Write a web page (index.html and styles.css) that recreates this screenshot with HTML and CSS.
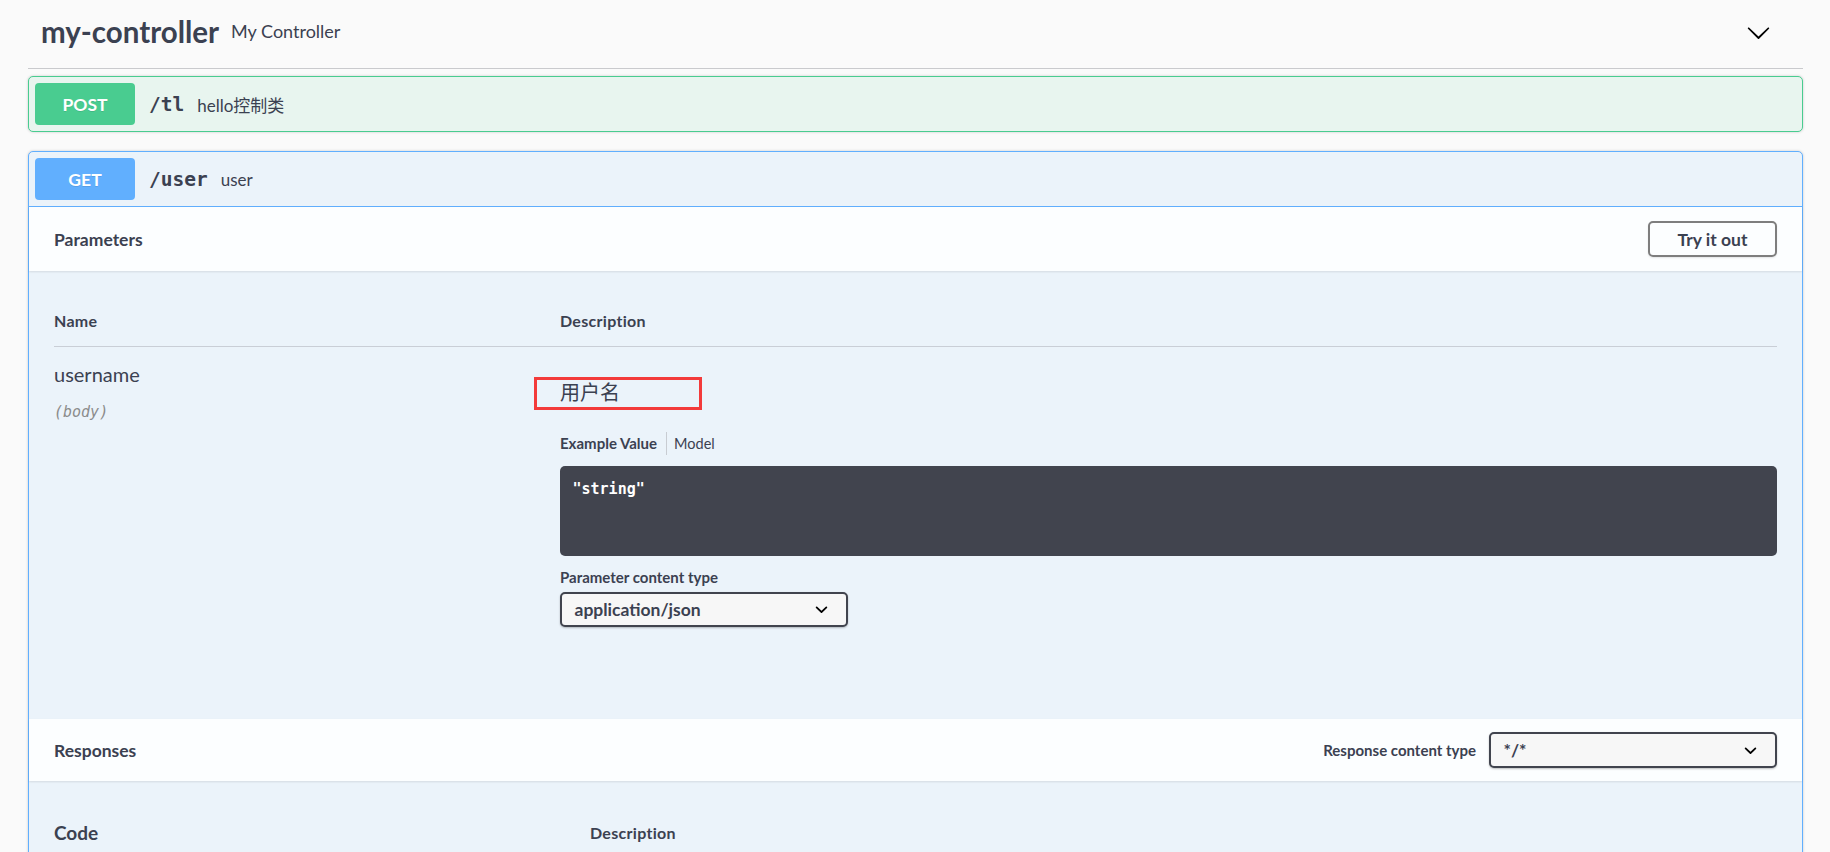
FILE: index.html
```html
<!DOCTYPE html>
<html lang="en">
<head>
<meta charset="utf-8">
<title>Swagger UI</title>
<link rel="stylesheet" href="styles.css">
</head>
<body>
<div class="page">
  <div class="wrapper">
    <section class="tag-section">
      <h3 class="opblock-tag">
        <span class="tag-name">my-controller</span>
        <small class="tag-desc">My Controller</small>
        <button class="expand" type="button" aria-label="collapse">
          <svg width="25" height="25" viewBox="0 0 20 20"><path d="M17.418 6.109c.272-.268.709-.268.979 0s.271.701 0 .969l-7.908 7.830c-.27.268-.707.268-.979 0l-7.908-7.830c-.27-.268-.27-.701 0-.969.271-.268.709-.268.979 0L10 13.25l7.418-7.141z" fill="#000"/></svg>
        </button>
      </h3>

      <div class="opblock opblock-post">
        <div class="summary">
          <span class="method">POST</span>
          <span class="path">/tl</span>
          <span class="summary-desc">hello控制类</span>
        </div>
      </div>

      <div class="opblock opblock-get is-open">
        <div class="summary">
          <span class="method">GET</span>
          <span class="path">/user</span>
          <span class="summary-desc">user</span>
        </div>

        <div class="section-header">
          <h4>Parameters</h4>
          <button class="try-out" type="button">Try it out</button>
        </div>

        <div class="table-container">
          <table class="parameters">
            <thead>
              <tr><th class="col-name">Name</th><th class="col-desc">Description</th></tr>
            </thead>
            <tbody>
              <tr>
                <td class="col-name">
                  <div class="param-name">username</div>
                  <div class="param-in">(body)</div>
                </td>
                <td class="col-desc">
                  <div class="markdown">用户名<span class="annot"></span></div>
                  <ul class="tabs">
                    <li class="tab active">Example Value</li>
                    <li class="tab">Model</li>
                  </ul>
                  <pre class="code">"string"</pre>
                  <div class="ct-label">Parameter content type</div>
                  <div class="select select-param">
                    <span>application/json</span>
                    <svg width="25" height="25" viewBox="0 0 20 20"><path d="M13.418 7.859a.695.695 0 01.978 0 .68.68 0 010 .969l-3.908 3.830a.697.697 0 01-.979 0l-3.908-3.830a.68.68 0 010-.969.695.695 0 01.978 0L10 11l3.418-3.141z" fill="#000"/></svg>
                  </div>
                </td>
              </tr>
            </tbody>
          </table>
        </div>

        <div class="section-header responses-header">
          <h4>Responses</h4>
          <span class="resp-label">Response content type</span>
          <div class="select select-resp">
            <span>*/*</span>
            <svg width="25" height="25" viewBox="0 0 20 20"><path d="M13.418 7.859a.695.695 0 01.978 0 .68.68 0 010 .969l-3.908 3.830a.697.697 0 01-.979 0l-3.908-3.830a.68.68 0 010-.969.695.695 0 01.978 0L10 11l3.418-3.141z" fill="#000"/></svg>
          </div>
        </div>

        <div class="responses-inner">
          <table class="responses">
            <thead>
              <tr><th class="col-code">Code</th><th class="col-rdesc">Description</th></tr>
            </thead>
          </table>
        </div>
      </div>
    </section>
  </div>
</div>
</body>
</html>
```

FILE: styles.css
```css
* { box-sizing: border-box; }

html, body {
  margin: 0;
  padding: 0;
  background: #fafafa;
}

body {
  font-family: "Lato", "Noto Sans CJK SC", sans-serif;
  color: #3b4151;
}

.page {
  height: 100vh;
  overflow: hidden;
}

.wrapper {
  padding: 0 27px 0 28px;
}

/* tag header */
.opblock-tag {
  display: flex;
  align-items: center;
  height: 69px;
  margin: 0 0 7px;
  padding: 0 32px 5px 13px;
  border-bottom: 1px solid #c9cacd;
  font-weight: 700;
}

.tag-name {
  font-size: 29.5px;
  line-height: 36px;
  color: #3b4151;
}

.tag-desc {
  flex: 1;
  padding: 0 12px;
  font-size: 18px;
  font-weight: 400;
  line-height: 21px;
  color: #3b4151;
}

.expand {
  display: flex;
  border: 0;
  padding: 0;
  background: none;
  margin-top: 2px;
}

/* op blocks */
.opblock {
  border: 1px solid #000;
  border-radius: 5px;
  box-shadow: 0 0 3px rgba(0, 0, 0, .19);
  margin-bottom: 19px;
}

.opblock-post {
  border-color: #49cc90;
  background: #e8f5ef;
}

.opblock-get {
  border-color: #61affe;
  background: #ebf3fa;
}

.summary {
  display: flex;
  align-items: center;
  padding: 6px;
}

.opblock-get .summary {
  border-bottom: 1px solid #61affe;
}

.method {
  width: 100px;
  height: 42px;
  display: flex;
  align-items: center;
  justify-content: center;
  border-radius: 4px;
  color: #fff;
  font-size: 17.5px;
  font-weight: 700;
  text-shadow: 0 1px 0 rgba(0, 0, 0, .1);
}

.opblock-post .method { background: #49cc90; }
.opblock-get .method { background: #61affe; }

.path {
  padding: 0 13px 0 14px;
  font-family: "DejaVu Sans Mono", monospace;
  font-weight: 700;
  font-size: 19.5px;
  color: #3b4151;
}

.summary-desc {
  font-size: 17px;
  color: #3b4151;
}

/* section headers */
.section-header {
  display: flex;
  align-items: center;
  min-height: 64px;
  padding: 8px 25px;
  background: #fcfeff;
  box-shadow: 0 1px 2px rgba(0, 0, 0, .1);
  position: relative;
}

.responses-header {
  min-height: 62px;
}

.section-header h4 {
  flex: 1;
  margin: 0;
  font-size: 17.5px;
  font-weight: 700;
  color: #3b4151;
}

.try-out {
  width: 129px;
  height: 36px;
  border: 2px solid #7e7e7e;
  border-radius: 5px;
  background: transparent;
  box-shadow: 0 1px 2px rgba(0, 0, 0, .1);
  font-family: "Lato", sans-serif;
  font-size: 17.5px;
  font-weight: 700;
  color: #3b4151;
  padding: 0;
}

/* parameter table */
.table-container {
  padding: 25px;
}

table {
  width: 100%;
  border-collapse: collapse;
}

th {
  text-align: left;
  font-size: 16px;
  letter-spacing: 0.3px;
  line-height: 20px;
  font-weight: 700;
  color: #3b4151;
  padding: 15px 0;
}

.parameters thead th {
  border-bottom: 1px solid #c9ced6;
}

.parameters .col-name { width: 506px; }

td {
  vertical-align: top;
  padding: 12px 0 13px;
}

.param-name {
  font-size: 20px;
  line-height: 30px;
  color: #3b4151;
}

.param-in {
  margin-top: 13px;
  font-family: "DejaVu Sans Mono", monospace;
  font-style: italic;
  font-size: 15px;
  line-height: 20px;
  color: #8c8c8c;
}

.markdown {
  position: relative;
  margin-top: 20px;
  font-size: 20px;
  line-height: 26px;
  color: #3b4151;
}

.annot {
  position: absolute;
  left: -26px;
  top: -2px;
  width: 168px;
  height: 33px;
  border: 3px solid #f33a3a;
}

.tabs {
  display: flex;
  list-style: none;
  margin: 27px 0 0;
  padding: 0;
  height: 23px;
}

.tab {
  font-size: 14.5px;
  line-height: 23px;
  color: #3b4151;
}

.tab.active {
  font-size: 15px;
  font-weight: 700;
  padding-right: 9px;
  border-right: 1px solid #c8ccd2;
}

.tab + .tab {
  padding-left: 7px;
}

.code {
  margin: 11px 0 0;
  height: 90px;
  padding: 12.5px;
  border-radius: 5px;
  background: #41444e;
  color: #fff;
  font-family: "DejaVu Sans Mono", monospace;
  font-weight: 700;
  font-size: 15px;
  line-height: 20px;
}

.ct-label {
  margin-top: 11px;
  font-size: 15px;
  line-height: 20px;
  font-weight: 700;
  color: #3b4151;
}

.select {
  display: flex;
  align-items: center;
  justify-content: space-between;
  border: 2px solid #41444e;
  border-radius: 5px;
  background: #f7f7f7;
  box-shadow: 0 1px 2px rgba(0, 0, 0, .25);
  padding: 0 12px 0 12.5px;
  font-size: 17.5px;
  font-weight: 700;
  color: #3b4151;
}

.select svg { flex: none; }

.select-param {
  width: 288px;
  height: 35px;
  margin-top: 5px;
  margin-bottom: 54px;
}

.resp-label {
  font-size: 15px;
  font-weight: 700;
  color: #3b4151;
}

.select-resp {
  width: 288px;
  height: 36px;
  margin-left: 13px;
}

/* responses */
.responses-inner {
  padding: 25px 25px 200px;
}

.responses .col-code {
  width: 536px;
  font-size: 19px;
  letter-spacing: 0;
  line-height: 24px;
}

.responses .col-rdesc {
  vertical-align: middle;
}
```
